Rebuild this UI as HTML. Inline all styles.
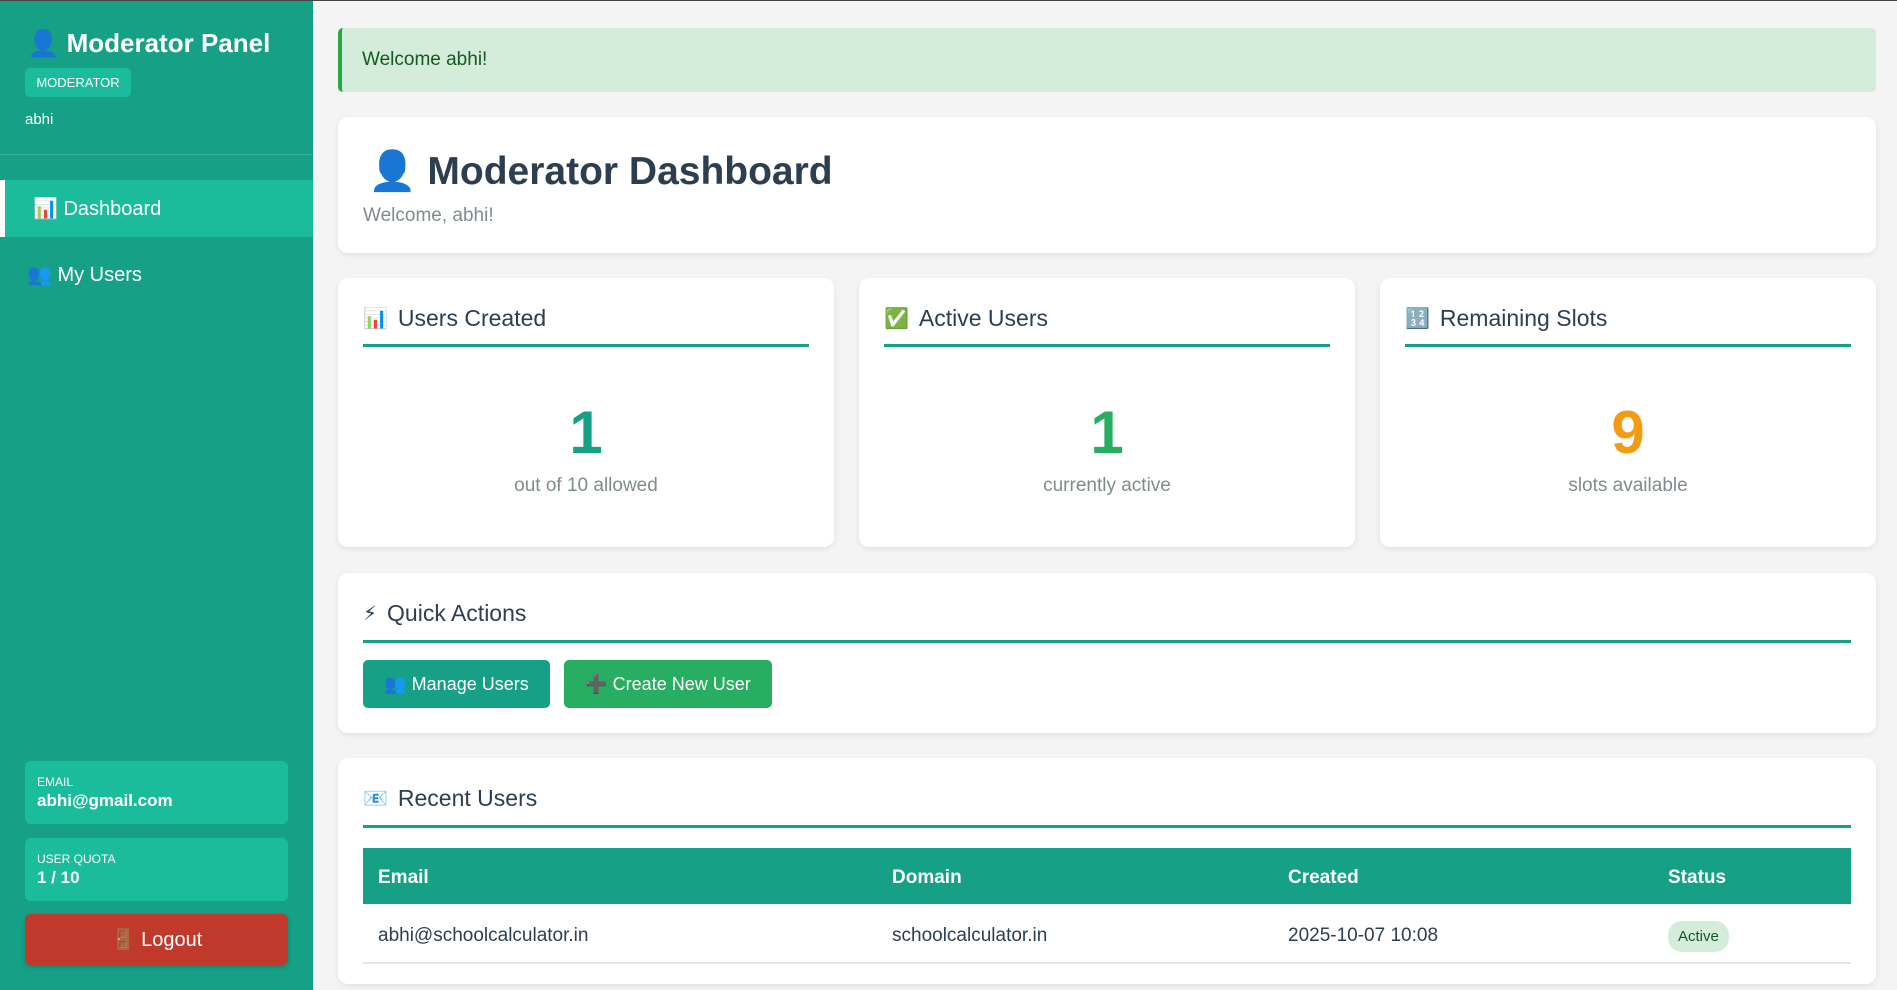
<!DOCTYPE html>
<html><head><meta charset="utf-8"><style>
*{box-sizing:border-box;margin:0;padding:0}
body{width:1897px;height:989px;overflow:hidden;background:#f4f4f4;font-family:"Liberation Sans","DejaVu Sans",sans-serif;position:relative;border-top:1px solid #444}
.side{position:absolute;left:0;top:0;width:313px;height:989px;background:#16a085;color:#fff}
.abs{position:absolute}
.card{position:absolute;background:#fff;border-radius:10px;box-shadow:0 2px 6px rgba(0,0,0,.08)}
.ct{position:absolute;left:25px;right:25px;top:0;height:69px;border-bottom:3px solid #16a085;font-size:23px;color:#2c3e50;display:flex;align-items:center;padding-top:14px}
.ct i{font-style:normal;margin-right:10px;font-size:20px}
.num{position:absolute;left:0;right:0;text-align:center;font-size:60px;font-weight:bold}
.sub{position:absolute;left:0;right:0;text-align:center;font-size:19px;color:#7f8c8d}
.btn{position:absolute;top:659px;height:48px;border-radius:5px;color:#fff;font-size:18px;display:flex;align-items:center;justify-content:center}
th{text-align:left;font-size:19px;color:#fff;font-weight:bold;padding-left:15px}
td{font-size:19px;color:#2c3e50;padding-left:15px;padding-top:6px}
</style></head><body>
<div class="side">
 <div class="abs" style="left:27px;top:27px;font-size:26px;font-weight:bold">👤 Moderator Panel</div>
 <div class="abs" style="left:25px;top:67px;width:106px;height:29px;background:#1abc9c;border-radius:5px;font-size:13px;display:flex;align-items:center;justify-content:center">MODERATOR</div>
 <div class="abs" style="left:25px;top:110px;font-size:15px">abhi</div>
 <div class="abs" style="left:0;top:153px;width:313px;border-top:1px solid rgba(255,255,255,.15)"></div>
 <div class="abs" style="left:0;top:179px;width:313px;height:57px;background:#1abc9c;border-left:5px solid #fff;display:flex;align-items:center;padding-left:28px;font-size:20px">📊&nbsp;Dashboard</div>
 <div class="abs" style="left:27px;top:261px;font-size:20px">👥&nbsp;My Users</div>
 <div class="abs" style="left:25px;top:760px;width:263px;height:63px;background:#1abc9c;border-radius:6px;padding:14px 12px"><div style="font-size:12px">EMAIL</div><div style="font-size:17px;font-weight:bold;margin-top:2px">abhi@gmail.com</div></div>
 <div class="abs" style="left:25px;top:837px;width:263px;height:63px;background:#1abc9c;border-radius:6px;padding:14px 12px"><div style="font-size:12px">USER QUOTA</div><div style="font-size:17px;font-weight:bold;margin-top:2px">1 / 10</div></div>
 <div class="abs" style="left:25px;top:913px;width:263px;height:51px;background:#c0392b;border-radius:6px;display:flex;align-items:center;justify-content:center;font-size:20px;box-shadow:0 2px 4px rgba(0,0,0,.2)">🚪 Logout</div>
</div>
<div class="abs" style="left:338px;top:27px;width:1538px;height:64px;background:#d4edda;border-left:4px solid #28a745;border-radius:5px;color:#155724;font-size:19px;display:flex;align-items:center;padding-left:20px">Welcome abhi!</div>
<div class="card" style="left:338px;top:116px;width:1538px;height:136px">
 <div class="abs" style="left:30px;top:31px;font-size:39px;font-weight:bold;color:#2c3e50">👤 Moderator Dashboard</div>
 <div class="abs" style="left:25px;top:88px;font-size:19px;color:#7f8c8d">Welcome, abhi!</div>
</div>
<div class="card" style="left:338px;top:277px;width:496px;height:269px"><div class="ct"><i>📊</i>Users Created</div><div class="num" style="top:120px;color:#16a085">1</div><div class="sub" style="top:197px">out of 10 allowed</div></div>
<div class="card" style="left:859px;top:277px;width:496px;height:269px"><div class="ct"><i>✅</i>Active Users</div><div class="num" style="top:120px;color:#27ae60">1</div><div class="sub" style="top:197px">currently active</div></div>
<div class="card" style="left:1380px;top:277px;width:496px;height:269px"><div class="ct"><i>🔢</i>Remaining Slots</div><div class="num" style="top:120px;color:#f39c12">9</div><div class="sub" style="top:197px">slots available</div></div>
<div class="card" style="left:338px;top:572px;width:1538px;height:160px"><div class="ct" style="height:70px"><i>⚡</i>Quick Actions</div></div>
<div class="btn" style="left:363px;width:187px;background:#16a085">👥&nbsp;Manage Users</div>
<div class="btn" style="left:564px;width:208px;background:#27ae60">➕&nbsp;Create New User</div>
<div class="card" style="left:338px;top:757px;width:1538px;height:226px">
 <div class="ct" style="height:70px"><i>📧</i>Recent Users</div>
 <table style="position:absolute;left:25px;top:90px;width:1488px;border-collapse:collapse">
  <tr style="background:#16a085;height:56px"><th style="width:514px;padding-top:4px">Email</th><th style="width:396px;padding-top:4px">Domain</th><th style="width:380px;padding-top:4px">Created</th><th style="padding-top:4px">Status</th></tr>
  <tr style="height:59px;border-bottom:2px solid #e5e5e5"><td>abhi@schoolcalculator.in</td><td>schoolcalculator.in</td><td>2025-10-07 10:08</td><td><span style="background:#d4edda;color:#155724;font-size:15px;padding:7px 10px;border-radius:14px">Active</span></td></tr>
 </table>
</div>
</body></html>
